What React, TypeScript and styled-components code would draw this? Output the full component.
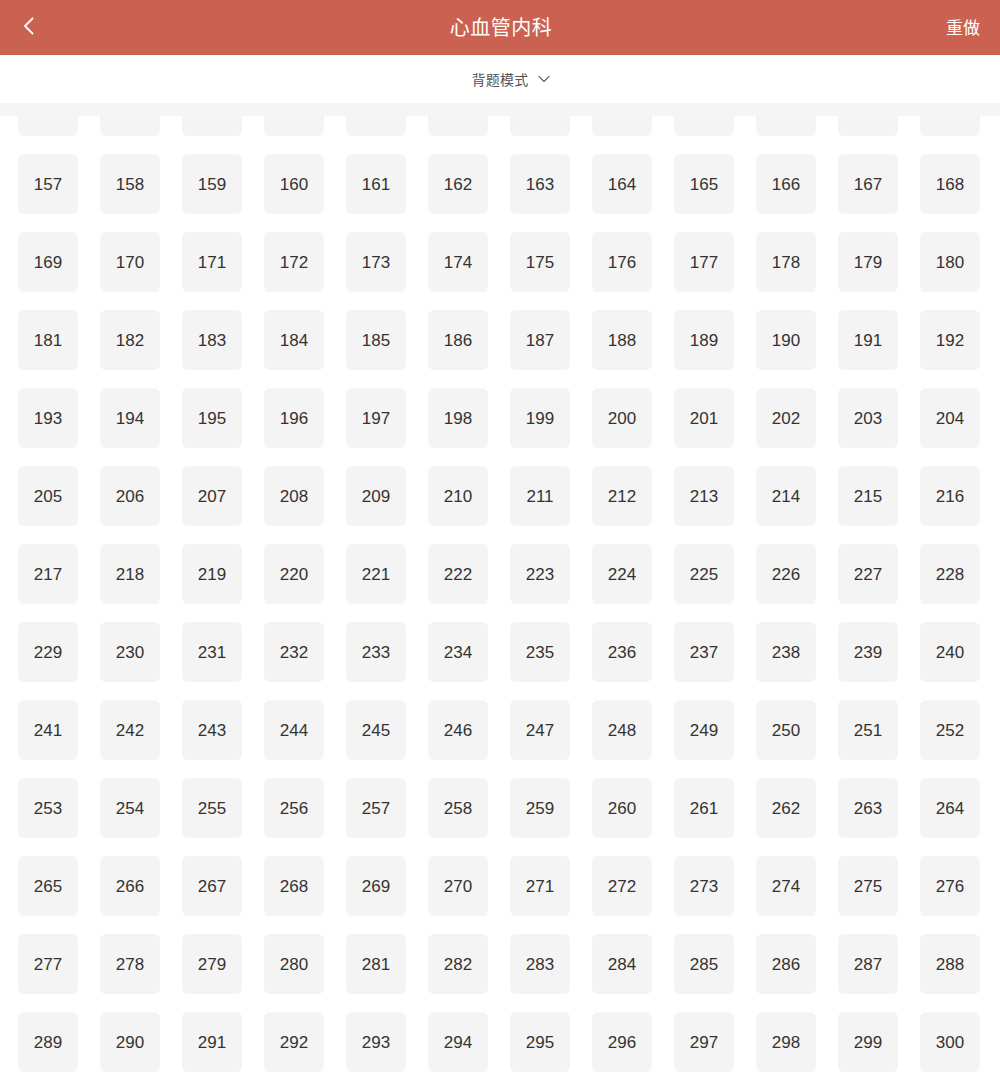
import * as React from 'react';
import styled, { createGlobalStyle } from 'styled-components';

const GlobalStyle = createGlobalStyle`
    html, body {
        margin: 0;
        padding: 0;
        background: #ffffff;
        font-family: "Liberation Sans", "Noto Sans CJK SC", sans-serif;
    }
`;

const Page = styled.div`
    display: flex;
    flex-direction: column;
    height: 1076px;
    overflow: hidden;
`;

const NavBar = styled.div`
    display: flex;
    align-items: center;
    height: 55px;
    box-sizing: border-box;
    padding: 0 20px 3px 22px;
    background-color: #cb6150;
    color: #ffffff;
`;

const BackBtn = styled.div`
    width: 60px;
    display: flex;
    align-items: center;
    cursor: pointer;
`;

const Title = styled.div`
    flex: 1;
    text-align: center;
    font-size: 20px;
    letter-spacing: 0.5px;
`;

const Action = styled.div`
    width: 60px;
    text-align: right;
    font-size: 17px;
    cursor: pointer;
`;

const ModeBar = styled.div`
    display: grid;
    grid-template-columns: 1fr auto 1fr;
    align-items: center;
    height: 48px;
    color: #555555;
    font-size: 14px;
`;

const ModeLabel = styled.span`
    grid-column: 2;
    letter-spacing: 0.3px;
`;

const ModeArrow = styled.span`
    grid-column: 3;
    justify-self: start;
    display: flex;
    margin-left: 9px;
`;

const Divider = styled.div`
    height: 13px;
    background: #f5f5f5;
`;

const Scroller = styled.div`
    flex: 1;
    overflow-y: auto;
    scrollbar-width: none;
    &::-webkit-scrollbar {
        display: none;
    }
`;

const Grid = styled.div`
    display: grid;
    grid-template-columns: repeat(12, 60px);
    column-gap: 22px;
    row-gap: 18px;
    padding: 18px 20px 6px 18px;
`;

const Cell = styled.div<{ $active?: boolean }>`
    height: 60px;
    display: flex;
    align-items: center;
    justify-content: center;
    border-radius: 6px;
    background: ${(p) => (p.$active ? '#cb6150' : '#f4f4f4')};
    color: ${(p) => (p.$active ? '#fff' : '#333333')};
    font-size: 17px;
    padding-top: 1px;
    box-sizing: border-box;
    cursor: pointer;
`;

const TOTAL = 300;

export default function App() {
    const scrollRef = React.useRef<HTMLDivElement>(null);

    React.useLayoutEffect(() => {
        // jump so that row 157 sits just below the divider
        if (scrollRef.current) {
            scrollRef.current.scrollTop = 18 + 78 * 13 - 38;
        }
    }, []);

    const items = Array.from({ length: TOTAL }, (_, i) => i + 1);

    return (
        <>
            <GlobalStyle />
            <Page>
                <NavBar>
                    <BackBtn>
                        <svg width="14" height="18" viewBox="0 0 14 18">
                            <path d="M10.5 1.5 L3 9 L10.5 16.5" fill="none" stroke="#fff" strokeWidth="1.8" strokeLinecap="round" strokeLinejoin="round" />
                        </svg>
                    </BackBtn>
                    <Title>心血管内科</Title>
                    <Action>重做</Action>
                </NavBar>
                <ModeBar>
                    <ModeLabel>背题模式</ModeLabel>
                    <ModeArrow>
                        <svg width="12" height="8" viewBox="0 0 12 8">
                            <path d="M1 1.5 L6 6.5 L11 1.5" fill="none" stroke="#666" strokeWidth="1.1" strokeLinecap="round" strokeLinejoin="round" />
                        </svg>
                    </ModeArrow>
                </ModeBar>
                <Divider />
                <Scroller ref={scrollRef}>
                    <Grid>
                        {items.map((n) => (
                            <Cell key={n}>{n}</Cell>
                        ))}
                    </Grid>
                </Scroller>
            </Page>
        </>
    );
}
